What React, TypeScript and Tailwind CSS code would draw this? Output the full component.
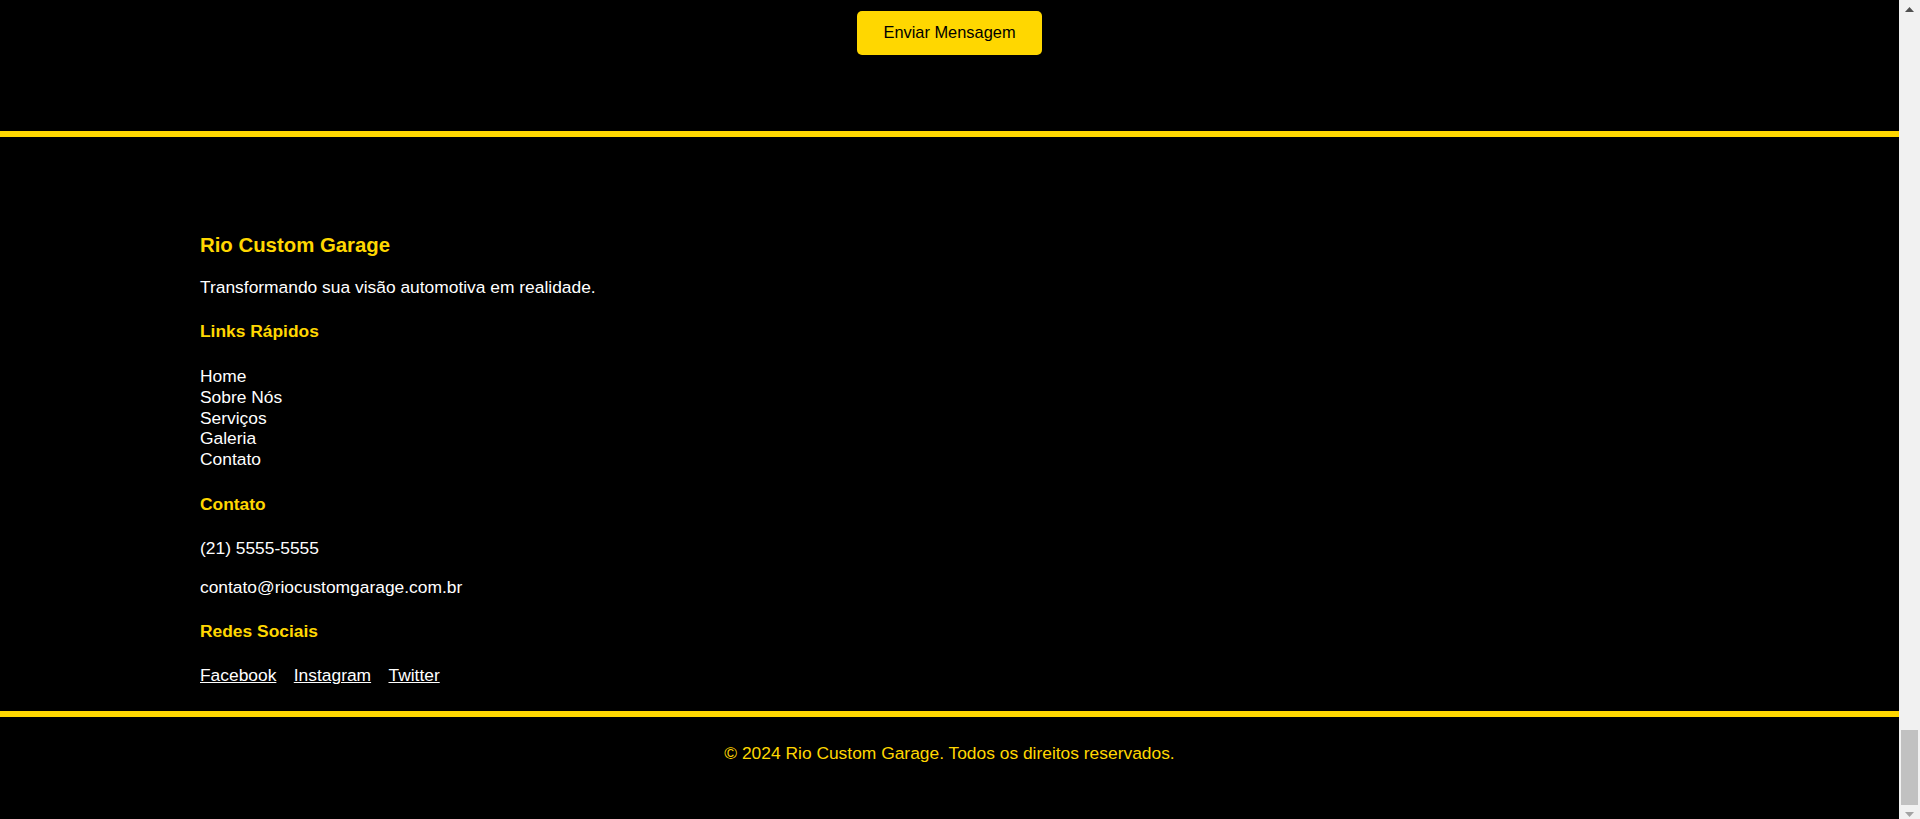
import React from 'react';

const quickLinks = ['Home', 'Sobre Nós', 'Serviços', 'Galeria', 'Contato'];
const socials = ['Facebook', 'Instagram', 'Twitter'];

const Footer: React.FC = () => {
    return (
        <>
            <footer className="border-t-[6px] border-[#ffd700] pt-[97px] pb-[26px]">
                <div className="max-w-[1499px] mx-auto">
                    <h3 className="text-[20.36px] leading-[23px] font-bold text-[#ffd700]">Rio Custom Garage</h3>
                    <p className="mt-[20px] leading-[20px] text-white">Transformando sua visão automotiva em realidade.</p>

                    <h4 className="mt-[24px] leading-[20px] font-bold text-[#ffd700]">Links Rápidos</h4>
                    <ul className="mt-[25px]">
                        {quickLinks.map((link) => (
                            <li key={link} className="leading-[20.8px]">
                                <a href="#" className="text-white">{link}</a>
                            </li>
                        ))}
                    </ul>

                    <h4 className="mt-[24px] leading-[20px] font-bold text-[#ffd700]">Contato</h4>
                    <p className="mt-[24px] leading-[20px] text-white">(21) 5555-5555</p>
                    <p className="mt-[19px] leading-[20px] text-white">contato@riocustomgarage.com.br</p>

                    <h4 className="mt-[24px] leading-[20px] font-bold text-[#ffd700]">Redes Sociais</h4>
                    <div className="mt-[24px] flex gap-[17.4px] leading-[20px]">
                        {socials.map((s) => (
                            <a key={s} href="#" className="text-white underline">{s}</a>
                        ))}
                    </div>
                </div>
            </footer>
            <div className="border-t-[6px] border-[#ffd700] pt-[26px] pb-[56px] text-center">
                <p className="leading-[20px] text-[#ffd700]">© 2024 Rio Custom Garage. Todos os direitos reservados.</p>
            </div>
        </>
    );
};

// the browser's scrollbar, page scrolled to the bottom
const Scrollbar: React.FC = () => (
    <div className="w-[21px] shrink-0 bg-[#f1f1f1] flex flex-col">
        <div className="h-[14px] pt-[7px] flex justify-center">
            <svg width="9" height="5" viewBox="0 0 9 5">
                <polygon points="4.5,0 9,5 0,5" fill="#505050" />
            </svg>
        </div>
        <div className="flex-1 flex flex-col justify-end px-[2px]">
            <div className="h-[75px] bg-[#c1c1c1]" />
        </div>
        <div className="h-[14px] pt-[7px] flex justify-center">
            <svg width="9" height="5" viewBox="0 0 9 5">
                <polygon points="0,0 9,0 4.5,5" fill="#a3a3a3" />
            </svg>
        </div>
    </div>
);

const App: React.FC = () => {
    return (
        <div className="flex h-screen bg-black font-['Liberation_Sans',Arial,sans-serif] text-[17.4px]">
            <main className="flex-1 min-w-0 flex flex-col">
                <section className="flex justify-center pt-[11px] pb-[76px]">
                    <button
                        type="submit"
                        className="w-[185px] h-[44px] pb-[2px] flex items-center justify-center rounded-[5px] bg-[#ffd700] text-black text-[16.4px]"
                    >
                        Enviar Mensagem
                    </button>
                </section>

                <Footer />
            </main>
            <Scrollbar />
        </div>
    );
};

export default App;
